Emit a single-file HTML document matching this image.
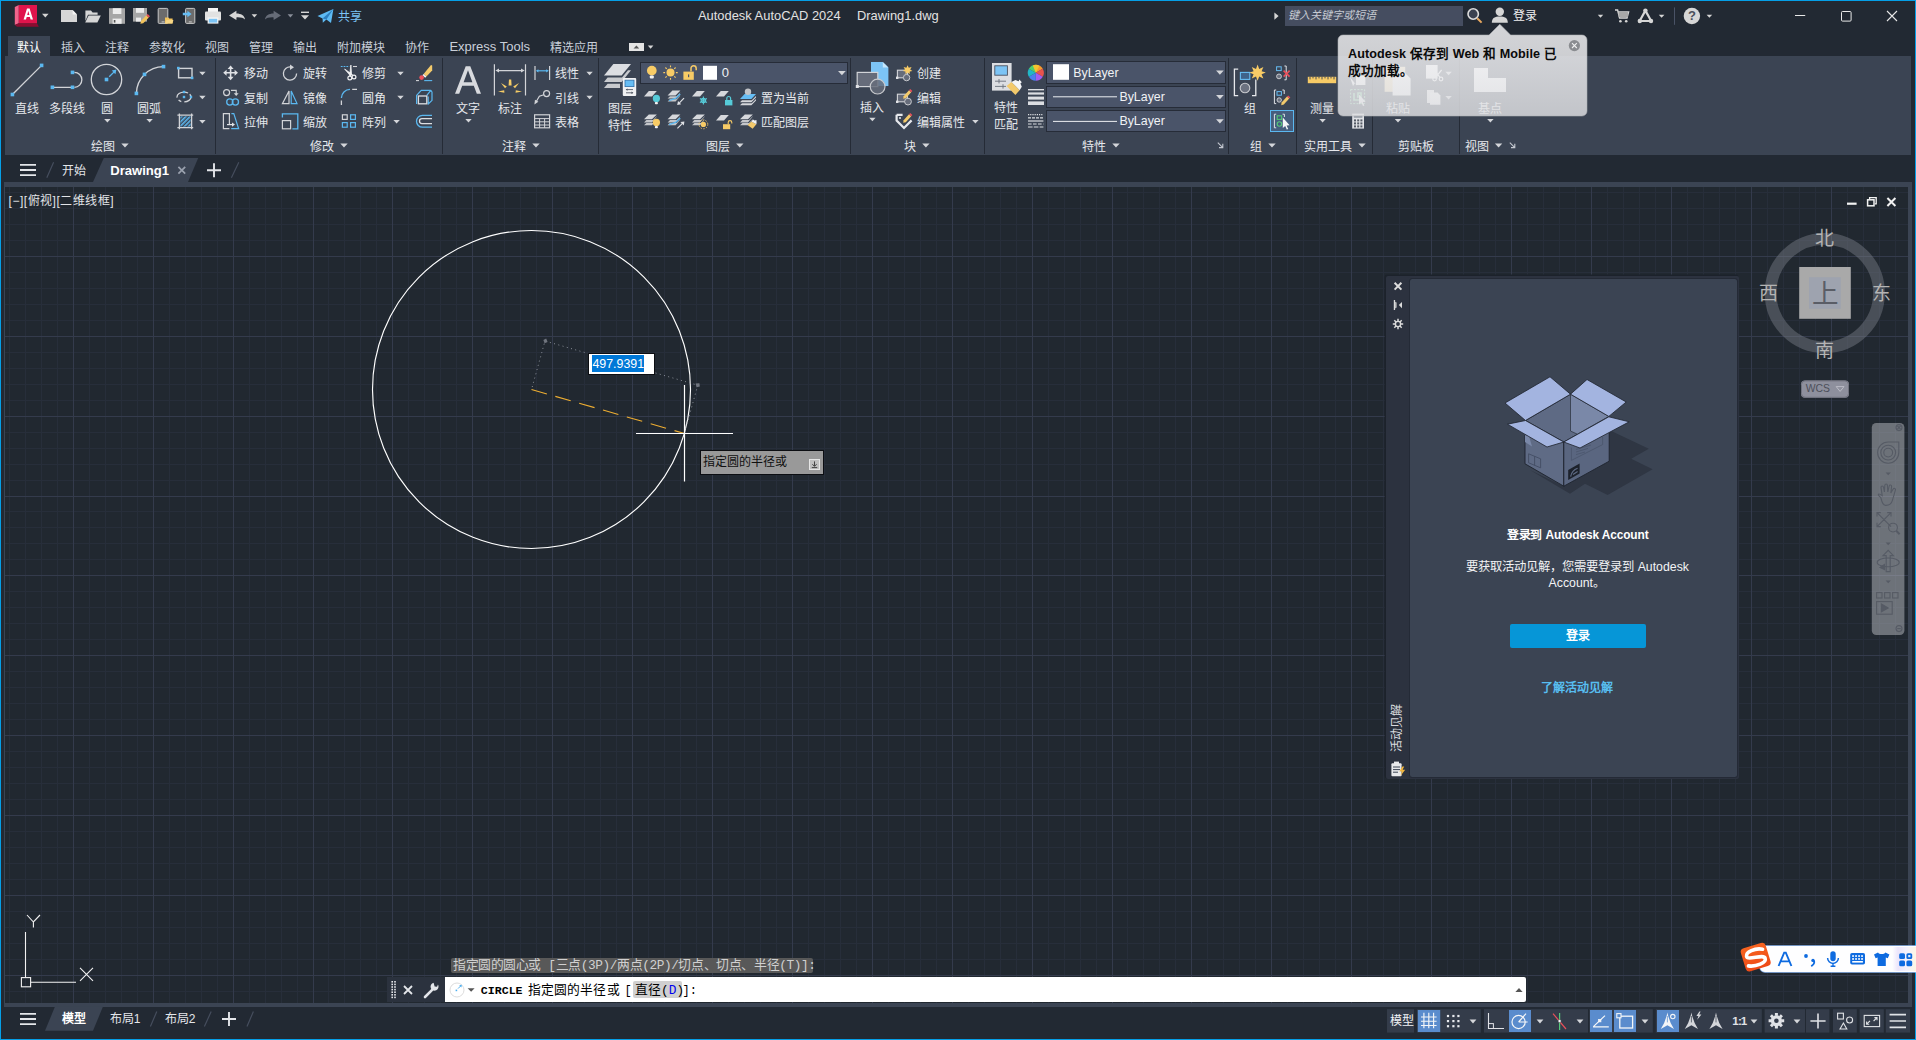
<!DOCTYPE html>
<html lang="zh-CN">
<head>
<meta charset="utf-8">
<title>Autodesk AutoCAD 2024 - Drawing1.dwg</title>
<style>
*{box-sizing:border-box;margin:0;padding:0}
html,body{width:1916px;height:1040px;overflow:hidden;background:#222933}
body{font-family:"Liberation Sans",sans-serif;font-size:12px;color:#e4e6ea;position:relative}
#win{position:absolute;left:0;top:0;width:1916px;height:1040px;background:#222933;overflow:hidden}
.a{position:absolute}
.c{position:absolute;transform:translate(-50%,-50%);white-space:nowrap;line-height:14px}
.l{position:absolute;transform:translate(0,-50%);white-space:nowrap;line-height:14px}
svg{position:absolute;left:0;top:0;overflow:visible}
.tab{position:absolute;top:40.8px;height:14px;line-height:14px;font-size:12px;color:#c9cfd9;white-space:nowrap}
.rb{color:#e6e8ec;font-size:12px;margin-top:1.4px}
.sep{position:absolute;top:58px;width:1px;height:96px;background:#252b36}
.dd{position:absolute;background:#4a5469;border:1px solid #262c38}
</style>
</head>
<body>
<div id="win">

<!-- ===== window borders ===== -->
<div class="a" style="left:0;top:0;width:1916px;height:1px;background:#059fe8"></div>
<div class="a" style="left:0;top:0;width:1px;height:1040px;background:#059fe8"></div>
<div class="a" style="left:1915px;top:0;width:1px;height:1040px;background:#059fe8"></div>
<div class="a" style="left:0;top:1038.8px;width:1916px;height:1.2px;background:#059fe8"></div>

<!-- ===== ribbon panel background ===== -->
<div class="a" id="ribbonbg" style="left:5px;top:56px;width:1906px;height:99px;background:#3b4453"></div>
<!-- active ribbon tab -->
<div class="a" style="left:8px;top:36px;width:42px;height:20px;background:#3b4453"></div>

<!-- ===== drawing frame strips ===== -->
<div class="a" style="left:4px;top:182px;width:1908px;height:825px;background:#3b4453"></div>
<!-- drawing area -->
<div class="a" id="draw" style="left:5px;top:187px;width:1903px;height:816px;background-color:#212830"></div>
<svg id="grid" width="1916" height="1040" viewBox="0 0 1916 1040" fill="none" shape-rendering="crispEdges"><path d="M9.5 187V1003M25.5 187V1003M41.5 187V1003M57.5 187V1003M89.5 187V1003M105.5 187V1003M121.5 187V1003M137.5 187V1003M169.5 187V1003M185.5 187V1003M201.5 187V1003M217.5 187V1003M249.5 187V1003M265.5 187V1003M281.5 187V1003M297.5 187V1003M328.5 187V1003M344.5 187V1003M360.5 187V1003M376.5 187V1003M408.5 187V1003M424.5 187V1003M440.5 187V1003M456.5 187V1003M488.5 187V1003M504.5 187V1003M520.5 187V1003M536.5 187V1003M568.5 187V1003M584.5 187V1003M600.5 187V1003M616.5 187V1003M648.5 187V1003M664.5 187V1003M680.5 187V1003M696.5 187V1003M728.5 187V1003M744.5 187V1003M760.5 187V1003M776.5 187V1003M808.5 187V1003M824.5 187V1003M840.5 187V1003M856.5 187V1003M888.5 187V1003M904.5 187V1003M920.5 187V1003M936.5 187V1003M968.5 187V1003M984.5 187V1003M1000.5 187V1003M1016.5 187V1003M1048.5 187V1003M1064.5 187V1003M1080.5 187V1003M1096.5 187V1003M1127.5 187V1003M1143.5 187V1003M1159.5 187V1003M1175.5 187V1003M1207.5 187V1003M1223.5 187V1003M1239.5 187V1003M1255.5 187V1003M1287.5 187V1003M1303.5 187V1003M1319.5 187V1003M1335.5 187V1003M1367.5 187V1003M1383.5 187V1003M1399.5 187V1003M1415.5 187V1003M1447.5 187V1003M1463.5 187V1003M1479.5 187V1003M1495.5 187V1003M1527.5 187V1003M1543.5 187V1003M1559.5 187V1003M1575.5 187V1003M1607.5 187V1003M1623.5 187V1003M1639.5 187V1003M1655.5 187V1003M1687.5 187V1003M1703.5 187V1003M1719.5 187V1003M1735.5 187V1003M1767.5 187V1003M1783.5 187V1003M1799.5 187V1003M1815.5 187V1003M1847.5 187V1003M1863.5 187V1003M1879.5 187V1003M1895.5 187V1003M5 192.5H1908M5 208.5H1908M5 224.5H1908M5 240.5H1908M5 272.5H1908M5 288.5H1908M5 304.5H1908M5 320.5H1908M5 352.5H1908M5 368.5H1908M5 384.5H1908M5 400.5H1908M5 432.5H1908M5 448.5H1908M5 464.5H1908M5 480.5H1908M5 511.5H1908M5 527.5H1908M5 543.5H1908M5 559.5H1908M5 591.5H1908M5 607.5H1908M5 623.5H1908M5 639.5H1908M5 671.5H1908M5 687.5H1908M5 703.5H1908M5 719.5H1908M5 751.5H1908M5 767.5H1908M5 783.5H1908M5 799.5H1908M5 831.5H1908M5 847.5H1908M5 863.5H1908M5 879.5H1908M5 911.5H1908M5 927.5H1908M5 943.5H1908M5 959.5H1908M5 991.5H1908" stroke="#272e3a" stroke-width="1"/><path d="M73.5 187V1003M153.5 187V1003M233.5 187V1003M313.5 187V1003M392.5 187V1003M472.5 187V1003M552.5 187V1003M632.5 187V1003M712.5 187V1003M792.5 187V1003M872.5 187V1003M952.5 187V1003M1032.5 187V1003M1112.5 187V1003M1191.5 187V1003M1271.5 187V1003M1351.5 187V1003M1431.5 187V1003M1511.5 187V1003M1591.5 187V1003M1671.5 187V1003M1751.5 187V1003M1831.5 187V1003M5 256.5H1908M5 336.5H1908M5 416.5H1908M5 496.5H1908M5 575.5H1908M5 655.5H1908M5 735.5H1908M5 815.5H1908M5 895.5H1908M5 975.5H1908" stroke="#343b4c" stroke-width="1"/></svg>

<!-- ===== TITLE BAR ===== -->
<svg id="tbsvg" width="1916" height="36" viewBox="0 0 1916 36">
  <!-- AutoCAD logo -->
  <polygon points="14.8,7 18.8,5 18.8,23.2 14.8,25" fill="#f0648c"/>
  <polygon points="14.8,25 18.8,23.2 37,23.2 38.8,26.7 17,26.7" fill="#8c0c30"/>
  <rect x="18.8" y="5" width="18.2" height="18.2" fill="#e0144c"/>
  <path d="M23.6 19.5 L27 8.5 L29.6 8.5 L33 19.5 L30.6 19.5 L29.9 17 L26.7 17 L26 19.5 Z M27.2 15 L29.4 15 L28.3 11 Z" fill="#fff"/>
  <polygon points="42,13.8 48.6,13.8 45.3,17.6" fill="#d4d4d4"/>
  <!-- new -->
  <polygon points="61,10 72.6,10 77,14.4 77,22 61,22" fill="#d6d6d6"/>
  <polygon points="72.6,10 77,14.4 72.6,14.4" fill="#f4f4f4"/>
  <!-- open -->
  <polygon points="85.4,10.6 91,10.6 92.6,12.4 97.6,12.4 97.6,14.8 88,14.8 85.4,21" fill="#d6d6d6"/>
  <polygon points="88.6,15.6 100.8,15.6 97.4,22.6 85.2,22.6" fill="#d6d6d6"/>
  <!-- save -->
  <rect x="109" y="8.2" width="16" height="15.6" fill="#a6a6a6"/>
  <rect x="112.8" y="8.2" width="8.6" height="5.8" fill="#ececec"/>
  <rect x="112.6" y="18.6" width="9" height="5.2" fill="#ececec"/>
  <rect x="113.8" y="20" width="1.6" height="2.6" fill="#555"/>
  <!-- save as -->
  <rect x="133" y="8" width="14" height="13.6" fill="#a6a6a6"/>
  <rect x="136" y="8" width="8" height="4.8" fill="#ececec"/>
  <rect x="136" y="17.6" width="5" height="4" fill="#ececec"/>
  <polygon points="141,21 146.4,15.2 148.8,17.4 143.2,23.2 140.4,23.8" fill="#f2c45c"/>
  <polygon points="146.4,15.2 147.6,14 150,16.2 148.8,17.4" fill="#e8505a"/>
  <!-- open from mobile -->
  <rect x="158.2" y="8.4" width="9.6" height="15" rx="1" fill="#6c6c6c" stroke="#c8c8c8" stroke-width="1"/>
  <rect x="161.6" y="21.4" width="3" height="1" fill="#c8c8c8"/>
  <polygon points="165,17.6 168.4,17.6 169.2,18.6 172.6,18.6 172.6,23.4 165,23.4" fill="#f2c45c"/>
  <polygon points="166.4,20 173.4,20 172.4,23.6 165,23.6" fill="#f7d685"/>
  <!-- save to mobile -->
  <rect x="185.6" y="8.4" width="9.2" height="15" rx="1" fill="#6c6c6c" stroke="#c8c8c8" stroke-width="1"/>
  <rect x="188.8" y="21.4" width="3" height="1" fill="#c8c8c8"/>
  <path d="M182.8 12.8 L187.4 12.8 L187.4 10.8 L191.6 14 L187.4 17.2 L187.4 15.2 L182.8 15.2 Z" fill="#66bdf4"/>
  <!-- print -->
  <rect x="208" y="8" width="10" height="4.4" fill="#f6f6f6"/>
  <rect x="205" y="11.6" width="16" height="9" rx="1" fill="#e2e2e2"/>
  <rect x="207.6" y="17.4" width="10.8" height="6.2" fill="#f6f6f6"/>
  <rect x="208.8" y="18.8" width="8.4" height="3.8" fill="#7cc4f5"/>
  <!-- undo -->
  <path d="M229 15.4 L236.4 10.8 L236.4 13.6 C241 13.6 244.6 15.6 245 19.6 C243.4 17.8 240.6 17.2 236.4 17.4 L236.4 20 Z" fill="#d6d6d6"/>
  <polygon points="251.6,14.2 257.2,14.2 254.4,17.4" fill="#d6d6d6"/>
  <!-- redo (dim) -->
  <path d="M281 15.4 L273.6 10.8 L273.6 13.6 C269 13.6 265.4 15.6 265 19.6 C266.6 17.8 269.4 17.2 273.6 17.4 L273.6 20 Z" fill="#666c78"/>
  <polygon points="287.6,14.2 293.2,14.2 290.4,17.4" fill="#8a8f9a"/>
  <!-- customize -->
  <rect x="301" y="11.6" width="8" height="1.4" fill="#d6d6d6"/>
  <polygon points="301,15.2 309,15.2 305,19.4" fill="#d6d6d6"/>
  <!-- share plane -->
  <polygon points="317.5,16 333.4,9 331,23 326.4,19.4 322.8,22.8 322.6,18.4" fill="#5ebaf3"/>
  <polygon points="322.6,18.4 333.4,9 326.4,19.4" fill="#2c7fc0"/>

  <!-- right side -->
  <polygon points="1274.4,12.4 1274.4,19.8 1278.6,16.1" fill="#d6d6d6"/>
  <rect x="1285" y="6" width="178" height="20" fill="#454d60"/>
  <circle cx="1473.2" cy="14" r="5.2" fill="#3a4150" stroke="#dcdcdc" stroke-width="1.6"/>
  <line x1="1477.2" y1="18.2" x2="1481.6" y2="22.6" stroke="#e8a860" stroke-width="2"/>
  <circle cx="1499.8" cy="11.8" r="4.2" fill="#d6d6d6"/>
  <path d="M1491.8 22.8 C1491.8 17.6 1495 16.4 1499.8 16.4 C1504.6 16.4 1507.8 17.6 1507.8 22.8 Z" fill="#d6d6d6"/>
  <polygon points="1597.8,14.8 1603.2,14.8 1600.5,17.8" fill="#d6d6d6"/>
  <!-- cart -->
  <path d="M1615 10 L1617.6 10 L1619.6 18 L1627 18 L1628.6 12 L1618.4 12" fill="none" stroke="#d6d6d6" stroke-width="1.4"/>
  <rect x="1618.6" y="12.2" width="9.4" height="5" fill="#a8a8a8"/>
  <circle cx="1620.4" cy="21.2" r="1.3" fill="#d6d6d6"/><circle cx="1626.2" cy="21.2" r="1.3" fill="#d6d6d6"/>
  <!-- autodesk A network -->
  <path d="M1645.4 10.6 L1639.6 21 L1651.2 21 Z" fill="none" stroke="#d6d6d6" stroke-width="2.2" stroke-linejoin="round"/>
  <circle cx="1645.4" cy="10.6" r="2.2" fill="#d6d6d6"/><circle cx="1639.8" cy="21" r="2.2" fill="#d6d6d6"/><circle cx="1651" cy="21" r="2.2" fill="#d6d6d6"/>
  <polygon points="1658.8,14.8 1664.4,14.8 1661.6,17.8" fill="#d6d6d6"/>
  <rect x="1674" y="7.4" width="1" height="17.4" fill="#4a5366"/>
  <circle cx="1691.9" cy="16" r="8.2" fill="#d6d6d6"/>
  <polygon points="1706.6,14.8 1712.2,14.8 1709.4,17.8" fill="#d6d6d6"/>
  <!-- window buttons -->
  <rect x="1795" y="15" width="10.2" height="1" fill="#e8e8e8"/>
  <rect x="1841.5" y="11.5" width="9.6" height="9.6" fill="none" stroke="#e8e8e8" stroke-width="1" rx="1"/>
  <path d="M1887 11 L1897 21 M1897 11 L1887 21" stroke="#e8e8e8" stroke-width="1.1"/>
</svg>
<div class="c" style="left:1691.9px;top:16.4px;font-size:13px;font-weight:bold;color:#4a4f5a">?</div>
<div class="l" style="left:337.6px;top:17.2px;color:#7cc4f5;font-size:12px">共享</div>
<div class="l" style="left:698px;top:15.6px;color:#e2e2e2;font-size:12.9px">Autodesk AutoCAD 2024</div>
<div class="l" style="left:857px;top:15.6px;color:#e2e2e2;font-size:12.9px">Drawing1.dwg</div>
<div class="l" style="left:1287.6px;top:15.4px;color:#c6cad2;font-size:11px;font-style:italic">键入关键字或短语</div>
<div class="l" style="left:1512.6px;top:16.4px;color:#f0f0f0;font-size:12px">登录</div>

<!-- ===== RIBBON TABS ===== -->
<div class="tab" style="left:16.8px;color:#fff">默认</div>
<div class="tab" style="left:60.8px">插入</div>
<div class="tab" style="left:104.8px">注释</div>
<div class="tab" style="left:149.4px">参数化</div>
<div class="tab" style="left:205px">视图</div>
<div class="tab" style="left:249.2px">管理</div>
<div class="tab" style="left:292.8px">输出</div>
<div class="tab" style="left:336.8px">附加模块</div>
<div class="tab" style="left:405.2px">协作</div>
<div class="tab" style="left:449.4px;font-size:13px;top:39.6px">Express Tools</div>
<div class="tab" style="left:549.8px">精选应用</div>
<div class="a" style="left:629px;top:43.4px;width:15px;height:7.6px;background:#e4e4e4"></div>
<svg width="1916" height="60" viewBox="0 0 1916 60"><polygon points="633.6,48.6 639.2,48.6 636.4,45.6" fill="#555"/><polygon points="647.8,45.6 653.4,45.6 650.6,48.8" fill="#d6d6d6"/></svg>

<!-- ===== RIBBON: separators ===== -->
<div class="sep" style="left:215px"></div>
<div class="sep" style="left:442px"></div>
<div class="sep" style="left:598px"></div>
<div class="sep" style="left:850px"></div>
<div class="sep" style="left:984px"></div>
<div class="sep" style="left:1228px"></div>
<div class="sep" style="left:1296px"></div>
<div class="sep" style="left:1372px"></div>
<div class="sep" style="left:1459px"></div>

<svg id="rbA" width="1916" height="160" viewBox="0 0 1916 160" fill="none">
 <defs>
  <polygon id="dn" points="-3.2,-1.6 3.2,-1.6 0,1.9" fill="#d4d6da"/>
  <pattern id="hat" width="3" height="3" patternUnits="userSpaceOnUse" patternTransform="rotate(-45)"><rect width="3" height="3" fill="#3b4453"/><rect width="3" height="1.6" fill="#5bb8f0"/></pattern>
 </defs>
 <!-- ===== DRAW ===== -->
 <line x1="12.4" y1="94.5" x2="41.6" y2="65.4" stroke="#d2d4d8" stroke-width="1.3"/>
 <rect x="10.6" y="92.7" width="3.6" height="3.6" fill="#5bb8f0"/><rect x="39.8" y="63.6" width="3.6" height="3.6" fill="#5bb8f0"/>
 <path d="M52.4 87.3 L72.5 87.3 M74.4 72.4 A7.45 7.45 0 0 1 74.4 87.3" stroke="#d2d4d8" stroke-width="1.3"/>
 <rect x="50.6" y="85.5" width="3.6" height="3.6" fill="#5bb8f0"/><rect x="70.7" y="85.5" width="3.6" height="3.6" fill="#5bb8f0"/><rect x="70.7" y="70.6" width="3.6" height="3.6" fill="#5bb8f0"/>
 <circle cx="106.5" cy="79.5" r="15.2" stroke="#d2d4d8" stroke-width="1.3"/>
 <rect x="104.7" y="77.7" width="3.6" height="3.6" fill="#5bb8f0"/>
 <path d="M109.2 76.8 L114.4 71.6" stroke="#5bb8f0" stroke-width="1.3"/><polygon points="116.4,69.6 115.4,74.2 111.8,70.6" fill="#5bb8f0"/>
 <path d="M136.4 93.4 A27.1 27.1 0 0 1 163.5 66.6" stroke="#d2d4d8" stroke-width="1.3"/>
 <rect x="134.6" y="91.6" width="3.6" height="3.6" fill="#5bb8f0"/><rect x="142.7" y="72.6" width="3.6" height="3.6" fill="#5bb8f0"/><rect x="161.7" y="64.8" width="3.6" height="3.6" fill="#5bb8f0"/>
 <rect x="178.6" y="68.4" width="13.4" height="9.4" stroke="#d2d4d8" stroke-width="1.4"/>
 <rect x="177" y="66.8" width="2.6" height="2.6" fill="#5bb8f0"/><rect x="190.8" y="76.6" width="2.6" height="2.6" fill="#5bb8f0"/>
 <use href="#dn" x="202.4" y="73.4"/><use href="#dn" x="202.4" y="97.4"/><use href="#dn" x="202.4" y="121.6"/>
 <ellipse cx="184" cy="97" rx="7" ry="4.9" stroke="#d2d4d8" stroke-width="1.3" stroke-dasharray="9 3 3 3 14 2"/>
 <rect x="182.8" y="95.8" width="2.4" height="2.4" fill="#5bb8f0"/><rect x="182.8" y="90.8" width="2.4" height="2.4" fill="#5bb8f0"/><rect x="189.8" y="95.8" width="2.4" height="2.4" fill="#5bb8f0"/>
 <rect x="180.4" y="116.4" width="10.2" height="10.2" fill="url(#hat)"/>
 <path d="M177.4 115.2 H193.2 M177.4 127.6 H193.2 M179.4 113.4 V129.2 M191.6 113.4 V129.2" stroke="#d2d4d8" stroke-width="1.3"/>
 <use href="#dn" x="107.4" y="120.6"/><use href="#dn" x="149.6" y="120.6"/>
 <use href="#dn" x="125" y="145.4" transform="translate(125 145.4) scale(1.15) translate(-125 -145.4)"/>

 <!-- ===== MODIFY ===== -->
 <!-- move -->
 <path d="M230.6 65.4 L233.6 69 H231.4 V72 H234.6 V69.8 L238 72.8 L234.6 75.8 V73.6 H231.4 V76.8 H233.6 L230.6 80.2 L227.6 76.8 H229.8 V73.6 H226.6 V75.8 L223.2 72.8 L226.6 69.8 V72 H229.8 V69 H227.6 Z" fill="#e0e2e6"/>
 <!-- copy -->
 <circle cx="226.6" cy="92.6" r="3" stroke="#d2d4d8" stroke-width="1.2"/>
 <path d="M231 90.4 H236.2 V94" stroke="#d2d4d8" stroke-width="1.2"/><polygon points="233.8,93.2 238.6,93.2 236.2,96" fill="#d2d4d8"/>
 <circle cx="229.8" cy="102" r="3.1" stroke="#5bb8f0" stroke-width="1.3"/><circle cx="235.4" cy="102" r="3.1" stroke="#5bb8f0" stroke-width="1.3"/>
 <!-- stretch -->
 <path d="M229.4 124 V113.6 H223.4 V128.6 H229.4" stroke="#d2d4d8" stroke-width="1.2"/>
 <path d="M231.4 113.6 H233.8 L238.6 128.6 H231.2" stroke="#5bb8f0" stroke-width="1.2"/>
 <path d="M227 124.6 H232.6" stroke="#e0e2e6" stroke-width="1.2"/><polygon points="232,122.4 235,124.6 232,126.8" fill="#e0e2e6"/>
 <!-- rotate -->
 <path d="M290.6 67 A6.6 6.6 0 1 0 296.6 73.6" stroke="#d2d4d8" stroke-width="1.3"/><polygon points="290,64.4 294,67.2 290,70" fill="#d2d4d8"/>
 <!-- mirror -->
 <path d="M289 91 V103.6 H282.4 Z" stroke="#d2d4d8" stroke-width="1.2"/><path d="M291.2 91 V103.6 H297 Z" stroke="#5bb8f0" stroke-width="1.2"/>
 <!-- scale -->
 <path d="M282.4 117.6 V113.8 H297.8 V128.8 H292.4" stroke="#5bb8f0" stroke-width="1.3"/><rect x="282.4" y="120.6" width="8.2" height="8.2" stroke="#d2d4d8" stroke-width="1.2"/>
 <!-- trim -->
 <path d="M340.8 66.5 H349.4" stroke="#5bb8f0" stroke-width="1.1" stroke-dasharray="1.8 1"/><path d="M353 66.5 H357" stroke="#d2d4d8" stroke-width="1.1"/>
 <path d="M350.9 65 L351.6 75 L349.6 75.4 Z M344.6 69 L351.6 74 L350.4 75.8 Z" fill="#f0f1f3" stroke="#f0f1f3" stroke-width="0.8" stroke-linejoin="round"/><circle cx="349.8" cy="78" r="1.9" stroke="#f0f1f3" stroke-width="1.2"/><circle cx="354" cy="77" r="1.9" stroke="#f0f1f3" stroke-width="1.2"/><path d="M350.6 75 L350.2 76.2 M351.6 74.6 L352.8 75.6" stroke="#f0f1f3" stroke-width="1.3"/>
 <!-- fillet -->
 <path d="M341.4 98 A8.6 8.6 0 0 1 350 89.4" stroke="#5bb8f0" stroke-width="1.3"/><path d="M341.4 100.4 V105 M352.2 89.4 H357" stroke="#d2d4d8" stroke-width="1.3"/>
 <!-- array -->
 <g stroke="#5bb8f0" stroke-width="1.2"><rect x="342.4" y="114.8" width="4.8" height="4.6" stroke="#d2d4d8"/><rect x="350.6" y="114.8" width="4.8" height="4.6"/><rect x="342.4" y="122.6" width="4.8" height="4.6"/><rect x="350.6" y="122.6" width="4.8" height="4.6"/></g>
 <use href="#dn" x="400.5" y="73.4"/><use href="#dn" x="400.5" y="97.4"/><use href="#dn" x="396.6" y="121.6"/>
 <!-- erase -->
 <polygon points="423.6,74 431,65 432.2,65.4 432.2,70.4 426.4,76.6" fill="#f3ca6c"/><polygon points="422.4,75.2 423.6,74 426.4,76.6 425.2,77.8" fill="#f4f5f7"/><circle cx="421.6" cy="77.6" r="2.3" fill="#f0505a"/>
 <path d="M424.2 80.6 H432.2" stroke="#5bb8f0" stroke-width="1.1"/><path d="M416 80.6 H419" stroke="#d2d4d8" stroke-width="1.1"/>
 <!-- explode -->
 <path d="M416.6 104 V95.4 L421.2 90.4 H430.8 L426.8 95.4 M430.8 90.4 L432 92 V100.4 L428.2 104 V96.6" stroke="#5bb8f0" stroke-width="1.2" stroke-linejoin="round"/>
 <rect x="418.4" y="96" width="8.4" height="7.8" stroke="#dcdee2" stroke-width="1.3"/>
 <!-- offset -->
 <path d="M432 115.4 H422.4 A5.9 5.9 0 0 0 422.4 127.2 H432" stroke="#5bb8f0" stroke-width="1.3"/><path d="M432 118.6 H422 A2.5 2.5 0 0 0 422 123.6 H432" stroke="#dcdee2" stroke-width="1.3"/>
 <use href="#dn" x="344" y="145.4" transform="translate(344 145.4) scale(1.15) translate(-344 -145.4)"/>

 <!-- ===== ANNOTATE ===== -->
 <path d="M455 93.8 L465.7 66.2 L470.3 66.2 L481 93.8 L476.8 93.8 L473.8 85.8 L462.2 85.8 L459.2 93.8 Z M463.6 82.2 L472.4 82.2 L468 70.2 Z" fill="#d8dade" fill-rule="evenodd"/>
 <use href="#dn" x="468.5" y="120.6"/>
 <path d="M494.4 64.2 V95.6 M525.5 64.2 V95.6 M497.6 70.6 H522.4" stroke="#d2d4d8" stroke-width="1.2"/>
 <polygon points="495.4,70.6 499,68.6 499,72.6" fill="#d2d4d8"/><polygon points="524.6,70.6 521,68.6 521,72.6" fill="#d2d4d8"/>
 <g fill="#f5cc66"><polygon points="498,91.4 504.2,90.2 504.4,92.8"/><polygon points="501,83 506.8,86.4 505,88.2"/><polygon points="509,79.4 511.2,79.4 511.6,85.6 508.6,85.6"/><polygon points="519,83 513.2,86.4 515,88.2"/><polygon points="522,91.4 515.8,90.2 515.6,92.8"/></g>
 <path d="M535 66 V80 M549.6 66 V80" stroke="#d2d4d8" stroke-width="1.2"/><path d="M537.4 70.8 H547.2" stroke="#5bb8f0" stroke-width="1.2"/><polygon points="535.8,70.8 538.4,69.2 538.4,72.4" fill="#5bb8f0"/><polygon points="548.8,70.8 546.2,69.2 546.2,72.4" fill="#5bb8f0"/>
 <use href="#dn" x="589.6" y="73.4"/><use href="#dn" x="589.6" y="97.4"/>
 <circle cx="546.6" cy="93.6" r="3" stroke="#d2d4d8" stroke-width="1.2"/><path d="M543.8 94.8 L539.4 96.2 L536 102" stroke="#d2d4d8" stroke-width="1.2"/><polygon points="534.4,104.4 535,99.8 538.4,101.8" fill="#d2d4d8"/>
 <rect x="534.6" y="114.8" width="15" height="13" stroke="#d2d4d8" stroke-width="1.2"/><path d="M534.6 118.6 H549.6 M534.6 121.8 H549.6 M534.6 125 H549.6 M539.6 118.6 V127.8 M544.6 118.6 V127.8" stroke="#d2d4d8" stroke-width="1"/>
 <use href="#dn" x="536" y="145.4" transform="translate(536 145.4) scale(1.15) translate(-536 -145.4)"/>
</svg>
<!-- labels: draw -->
<div class="c rb" style="left:27px;top:107.4px">直线</div>
<div class="c rb" style="left:67.2px;top:107.4px">多段线</div>
<div class="c rb" style="left:107px;top:107.4px">圆</div>
<div class="c rb" style="left:149.4px;top:107.4px">圆弧</div>
<div class="c rb" style="left:103px;top:145.4px">绘图</div>
<!-- labels: modify -->
<div class="l rb" style="left:243.8px;top:72.8px">移动</div>
<div class="l rb" style="left:243.8px;top:97.2px">复制</div>
<div class="l rb" style="left:243.8px;top:121.4px">拉伸</div>
<div class="l rb" style="left:303px;top:72.8px">旋转</div>
<div class="l rb" style="left:303px;top:97.2px">镜像</div>
<div class="l rb" style="left:303px;top:121.4px">缩放</div>
<div class="l rb" style="left:362px;top:72.8px">修剪</div>
<div class="l rb" style="left:362px;top:97.2px">圆角</div>
<div class="l rb" style="left:362px;top:121.4px">阵列</div>
<div class="c rb" style="left:322.2px;top:145.4px">修改</div>
<!-- labels: annotate -->
<div class="c rb" style="left:468px;top:107.4px">文字</div>
<div class="c rb" style="left:510px;top:107.4px">标注</div>
<div class="l rb" style="left:555px;top:72.8px">线性</div>
<div class="l rb" style="left:555px;top:97.2px">引线</div>
<div class="l rb" style="left:555px;top:121.4px">表格</div>
<div class="c rb" style="left:514px;top:145.4px">注释</div>

<!-- dropdown boxes -->
<div class="dd" style="left:640px;top:62px;width:208px;height:22px"></div>
<div class="dd" style="left:1046px;top:61px;width:180px;height:23px"></div>
<div class="dd" style="left:1046px;top:86px;width:180px;height:22px"></div>
<div class="dd" style="left:1046px;top:110px;width:180px;height:22px"></div>
<div class="a" style="left:1270px;top:110px;width:24px;height:22px;background:#455e7e;border:1px solid #5bb8f0"></div>
<svg id="rbB" width="1916" height="160" viewBox="0 0 1916 160" fill="none">
 <defs>
  <g id="sheet"><polygon points="-6.4,1.4 -1.6,-4 6.4,-4 1.6,1.4" fill="#d6d8dc"/></g>
  <g id="stack"><polygon points="-6.4,-1.2 -1.6,-6 6.4,-6 1.6,-1.2" fill="#d6d8dc"/><polygon points="-6.4,2 -4,-0.4 2.6,-0.4 6,-3.8 6.4,-3.8 1.6,2" fill="#c4c6ca"/><polygon points="-6.4,4.8 -4,2.6 2.6,2.6 6,-0.8 6.4,-0.8 1.6,4.8" fill="#c4c6ca"/></g>
  <g id="bulb"><circle cx="0" cy="-1" r="3.6"/><rect x="-1.5" y="2.6" width="3" height="2.2" rx="0.8" fill="#f2f2f2"/></g>
 </defs>
 <!-- ===== LAYERS ===== -->
 <polygon points="604,75.6 613.4,64 631,64 621.6,75.6" fill="#dcdee2"/>
 <polygon points="604,82 607.6,77.6 622,77.6 628,70.2 631,70.2 621.6,82" fill="#c8cace"/>
 <polygon points="604,88 607.6,83.8 620,83.8 620,88" fill="#c8cace"/>
 <rect x="622.8" y="78" width="13.4" height="18" rx="1" fill="#f0f1f3"/><rect x="625" y="80.2" width="9" height="6.4" fill="#66bdf4" stroke="#2d6fa8" stroke-width="0.8"/>
 <path d="M626 89.6 H633 M626 92.8 H633" stroke="#555b66" stroke-width="0.9"/><polygon points="625.6,89.6 627.6,88.4 627.6,90.8" fill="#555b66"/><polygon points="633.4,92.8 631.4,91.6 631.4,94" fill="#555b66"/>
 <!-- dropdown content -->
 <use href="#bulb" x="651.8" y="72" fill="#f7cb66" transform="translate(651.8 72) scale(1.35) translate(-651.8 -72)"/>
 <circle cx="670.5" cy="72.6" r="4" fill="#f7cb66"/><g stroke="#f7cb66" stroke-width="1.1"><path d="M670.5 65.4 V67.2 M670.5 78 V79.8 M663.3 72.6 H665.1 M675.9 72.6 H677.7 M665.4 67.5 L666.7 68.8 M674.3 76.4 L675.6 77.7 M665.4 77.7 L666.7 76.4 M674.3 68.8 L675.6 67.5"/></g>
 <rect x="683.4" y="71.6" width="10.4" height="8.2" fill="#f7cb66"/><path d="M691 71.6 V68.4 A2.6 2.6 0 0 1 696.2 68.4 V70.2" stroke="#f7cb66" stroke-width="1.5"/><rect x="688" y="74.4" width="1.2" height="2.8" fill="#4a5469"/>
 <rect x="703" y="65.8" width="14" height="14" fill="#fff"/>
 <use href="#dn" x="841.9" y="73" transform="translate(841.9 73) scale(1.2) translate(-841.9 -73)"/>
 <!-- row 2 -->
 <use href="#sheet" x="650.4" y="95"/><use href="#bulb" x="656.4" y="99.4" fill="#56cbd8"/>
 <use href="#stack" x="674" y="96.6"/><path d="M669 100.6 L676 98.2 L680.2 94 " stroke="#5bb8f0" stroke-width="1.4"/><path d="M684 98.2 L679.4 102.8" stroke="#e0e2e6" stroke-width="1.2"/><polygon points="677.2,105 678,101 681.2,104.2" fill="#e0e2e6"/>
 <use href="#sheet" x="698.4" y="95"/><g stroke="#56cbd8" stroke-width="1.1"><path d="M703.4 96.4 V104.4 M699.9 98.4 L706.9 102.4 M699.9 102.4 L706.9 98.4"/><circle cx="703.4" cy="100.4" r="2.2"/></g>
 <use href="#sheet" x="722.4" y="95"/><rect x="725" y="100" width="7.4" height="5.4" fill="#56cbd8"/><path d="M726.8 100 V98.4 A1.9 1.9 0 0 1 730.6 98.4 V100" stroke="#56cbd8" stroke-width="1.2"/>
 <polygon points="740,99 744.6,94 756,94 751.4,99" fill="#66bdf4"/><polygon points="740,102.2 742,100.2 751.8,100.2 756,96 756,97.4 751.4,102.2" fill="#d6d8dc"/><polygon points="740,105.2 742,103.2 751.8,103.2 756,99 756,100.4 751.4,105.2" fill="#d6d8dc"/><circle cx="748" cy="91.8" r="3.2" fill="#c2c4c8"/>
 <!-- row 3 -->
 <use href="#stack" x="650.4" y="120.4"/><use href="#bulb" x="656.4" y="123.4" fill="#f7cb66"/>
 <use href="#stack" x="674" y="120.4"/><path d="M669 124.6 L676 122.2 L680.2 118" stroke="#5bb8f0" stroke-width="1.4"/><path d="M677.4 128.4 L682.4 123.4" stroke="#e0e2e6" stroke-width="1.2"/><polygon points="684.4,121.4 683.8,125.4 680.4,122" fill="#e0e2e6"/>
 <use href="#stack" x="698.4" y="120.4"/><circle cx="703.4" cy="124.4" r="2.6" fill="#f7cb66"/><circle cx="703.4" cy="124.4" r="4.4" stroke="#f7cb66" stroke-width="1" stroke-dasharray="1.2 1.6"/>
 <use href="#sheet" x="722.4" y="119"/><rect x="723" y="124.2" width="7.2" height="5" fill="#f7cb66"/><path d="M728.2 124.2 V122.4 A1.8 1.8 0 0 1 731.8 122.4 V123.4" stroke="#f7cb66" stroke-width="1.1"/>
 <use href="#stack" x="746.4" y="120.4"/><polygon points="747.6,125 751.4,121.6 756.4,124.2 752.6,128.8" fill="#f3ca6c"/><polygon points="751.4,121.6 753,119.4 754.6,120.6 756.4,120 756.6,122.4 756.4,124.2" fill="#f0f1f3"/>
 <use href="#dn" x="739.8" y="145.4" transform="translate(739.8 145.4) scale(1.15) translate(-739.8 -145.4)"/>

 <!-- ===== BLOCK ===== -->
 <polygon points="871,62 882.8,62 888.4,67.6 888.4,86 871,86" fill="#7cc4f5"/><polygon points="882.8,62 888.4,67.6 882.8,67.6" fill="#c6e6fb"/>
 <rect x="857.2" y="72.4" width="20.6" height="14.2" fill="#666c7a" stroke="#d2d4d8" stroke-width="1.2"/><rect x="855.8" y="85" width="3" height="3" fill="#e0e2e6"/>
 <circle cx="877.6" cy="86.6" r="7.4" fill="#666c7a" fill-opacity="0.85" stroke="#c8cace" stroke-width="1.2"/>
 <use href="#dn" x="872.4" y="119.4"/>
 <!-- create -->
 <rect x="897.4" y="70.2" width="10" height="7.6" fill="#666c7a" stroke="#d2d4d8" stroke-width="1.1"/><rect x="896" y="76.6" width="2.4" height="2.4" fill="#e0e2e6"/><circle cx="906.6" cy="77.6" r="3.2" fill="#666c7a" stroke="#c8cace" stroke-width="1"/>
 <polygon points="907.6,65.2 908.8,67.8 911.6,67 910.2,69.4 912.4,71 909.8,71.6 909.6,74.2 907.6,72.4 905.6,74.2 905.4,71.6 902.8,71 905,69.4 903.6,67 906.4,67.8" fill="#f7cb66"/>
 <!-- edit -->
 <rect x="897.4" y="94.2" width="10" height="7.6" fill="#666c7a" stroke="#d2d4d8" stroke-width="1.1"/><rect x="896" y="100.6" width="2.4" height="2.4" fill="#e0e2e6"/><circle cx="908" cy="101.6" r="3.4" fill="#666c7a" stroke="#c8cace" stroke-width="1"/>
 <polygon points="903.6,96.2 909,90.2 911.2,92.2 905.8,98.2 903.2,98.8" fill="#f3ca6c"/><polygon points="909,90.2 910.2,89 912.4,91 911.2,92.2" fill="#e8505a"/>
 <!-- edit attributes -->
 <path d="M896.6 114.8 H902.6 M896.6 114.8 V120.6 L904 128 L911.6 120.4" stroke="#e6e8ec" stroke-width="2.2"/><circle cx="900" cy="118" r="1" fill="#e6e8ec"/>
 <polygon points="903.6,120.2 909,114.2 911.2,116.2 905.8,122.2 903.2,122.8" fill="#f3ca6c"/><polygon points="909,114.2 910.2,113 912.4,115 911.2,116.2" fill="#e8505a"/>
 <use href="#dn" x="975.4" y="121.6"/>
 <use href="#dn" x="925.9" y="145.4" transform="translate(925.9 145.4) scale(1.15) translate(-925.9 -145.4)"/>

 <!-- ===== PROPERTIES ===== -->
 <rect x="992" y="63" width="19.6" height="27.6" fill="#dcdee2"/><rect x="994.8" y="65.8" width="12.6" height="9.4" fill="#7cc4f5" stroke="#4a5060" stroke-width="0.9"/>
 <path d="M995 81.2 H1006 M995 86.4 H1006 M999 79 V83.4 M1003 84.2 V88.6" stroke="#6a707c" stroke-width="0.9"/>
 <polygon points="1006.6,86 1011.4,82 1019.6,90.2 1015.4,95 " fill="#f3ca6c"/><polygon points="1011.4,82 1015.4,80 1018.6,81.2 1019.4,79.6 1021.8,82.2 1020.4,83.4 1021.8,86.8 1019.6,90.2" fill="#f4f5f7"/>
 <g transform="translate(1035.8 72.8)"><path d="M0 0 L0 -8 A8 8 0 0 1 6.93 -4 Z" fill="#fa9a2e"/><path d="M0 0 L6.93 -4 A8 8 0 0 1 6.93 4 Z" fill="#e8534d"/><path d="M0 0 L6.93 4 A8 8 0 0 1 0 8 Z" fill="#a35cf0"/><path d="M0 0 L0 8 A8 8 0 0 1 -6.93 4 Z" fill="#4a7ff0"/><path d="M0 0 L-6.93 4 A8 8 0 0 1 -6.93 -4 Z" fill="#21b7c6"/><path d="M0 0 L-6.93 -4 A8 8 0 0 1 0 -8 Z" fill="#4fcf6c"/><path d="M0 0 L-3 -7.4 A8 8 0 0 1 3.6 -7.1 Z" fill="#f6c32f"/></g>
 <rect x="1028" y="89" width="16" height="1.4" fill="#dcdee2"/><rect x="1028" y="92.4" width="16" height="2.2" fill="#dcdee2"/><rect x="1028" y="96.6" width="16" height="3" fill="#dcdee2"/><rect x="1028" y="101.4" width="16" height="3.6" fill="#dcdee2"/>
 <g stroke="#dcdee2" stroke-width="1.2"><path d="M1028 114.6 H1043.4" stroke-dasharray="1.2 1"/><path d="M1028 117.8 H1043.4" stroke-dasharray="3 1"/><path d="M1028 121 H1043.4"/><path d="M1028 124 H1043.4" stroke-dasharray="3.6 1.4"/><path d="M1028 127 H1043.4" stroke-dasharray="4.6 1.2"/></g>
 <rect x="1053" y="64.2" width="16" height="15.6" fill="#fff"/>
 <path d="M1053 96.8 H1117 M1053 121.4 H1117" stroke="#eceef2" stroke-width="1"/>
 <use href="#dn" x="1219.9" y="72.4" transform="translate(1219.9 72.4) scale(1.2) translate(-1219.9 -72.4)"/><use href="#dn" x="1219.9" y="97" transform="translate(1219.9 97) scale(1.2) translate(-1219.9 -97)"/><use href="#dn" x="1219.9" y="121.2" transform="translate(1219.9 121.2) scale(1.2) translate(-1219.9 -121.2)"/>
 <use href="#dn" x="1116" y="145.4" transform="translate(1116 145.4) scale(1.15) translate(-1116 -145.4)"/>
 <path d="M1217.8 142.6 L1222.6 147.4 M1219 147.6 H1222.8 V143.8" stroke="#c4c8d0" stroke-width="1.1"/>

 <!-- ===== GROUPS ===== -->
 <path d="M1238.2 69.2 H1234.4 V95.6 H1238.2 M1255.8 79.6 V95.6 H1252" stroke="#e6e8ec" stroke-width="1.3"/>
 <rect x="1240.4" y="72.4" width="9.4" height="7" fill="#3f638a" stroke="#66bdf4" stroke-width="1.1"/><circle cx="1245" cy="88" r="4.8" fill="#6c7280" stroke="#c8cace" stroke-width="1.1"/>
 <polygon points="1257.6,64.4 1259.2,69 1263.4,67 1261.6,71.2 1265.8,72.6 1261.6,74.2 1263.4,78.4 1259.2,76.6 1257.6,80.8 1256,76.6 1251.8,78.4 1253.6,74.2 1249.4,72.6 1253.6,71.2 1251.8,67 1256,69" fill="#f7cb66"/>
 <!-- ungroup -->
 <rect x="1276.6" y="66.8" width="4.6" height="3.8" stroke="#66bdf4" stroke-width="1"/><circle cx="1279" cy="76.4" r="2.4" fill="#6c7280" stroke="#c8cace" stroke-width="1"/><path d="M1284.4 66 H1286.2 V79.8 H1284.4" stroke="#e0e2e6" stroke-width="1"/>
 <path d="M1283.6 70.6 L1289.6 76.6 M1289.6 70.6 L1283.6 76.6" stroke="#e8505a" stroke-width="1.6"/>
 <!-- group edit -->
 <path d="M1276.2 90 H1274.4 V103.6 H1276.2 M1282.4 90 H1284.2 V94" stroke="#e0e2e6" stroke-width="1"/><rect x="1277" y="91.6" width="4.4" height="3.6" stroke="#66bdf4" stroke-width="1"/><circle cx="1279.2" cy="100" r="2.2" fill="#6c7280" stroke="#c8cace" stroke-width="1"/>
 <polygon points="1281.6,102.6 1287,96.6 1289.2,98.6 1283.8,104.6 1281.2,105.2" fill="#f3ca6c"/><polygon points="1287,96.6 1288.2,95.4 1290.4,97.4 1289.2,98.6" fill="#e8505a"/>
 <!-- group selection (active) -->
 <path d="M1276.2 114.2 H1274.4 V127.8 H1276.2 M1282.6 114.2 H1284.4 V117" stroke="#e0e2e6" stroke-width="1"/><rect x="1277.2" y="115.8" width="4.4" height="3.6" stroke="#54c878" stroke-width="1.1"/><circle cx="1279.4" cy="124" r="2.2" stroke="#54c878" stroke-width="1.1"/>
 <polygon points="1282.8,117.6 1282.8,128 1285.2,126 1286.8,129.6 1288.2,129 1286.6,125.4 1289.6,125.2" fill="#f4f5f7"/>
 <use href="#dn" x="1272" y="145.4" transform="translate(1272 145.4) scale(1.15) translate(-1272 -145.4)"/>

 <!-- ===== UTILITIES ===== -->
 <rect x="1307.8" y="76.8" width="28.4" height="6.4" fill="#f7cb66"/><path d="M1310 76.8 V79.4 M1313 76.8 V78.4 M1316 76.8 V79.4 M1319 76.8 V78.4 M1322 76.8 V79.4 M1325 76.8 V78.4 M1328 76.8 V79.4 M1331 76.8 V78.4 M1334 76.8 V79.4" stroke="#3b4453" stroke-width="0.9"/>
 <use href="#dn" x="1322.6" y="120.6"/>
 <rect x="1352.2" y="113.6" width="11.8" height="15" fill="#e0e2e6"/><rect x="1353.8" y="115.2" width="8.6" height="2.6" fill="#9aa0aa"/><g fill="#555b66"><rect x="1354" y="119.4" width="2" height="2"/><rect x="1357.2" y="119.4" width="2" height="2"/><rect x="1360.4" y="119.4" width="2" height="2"/><rect x="1354" y="122.4" width="2" height="2"/><rect x="1357.2" y="122.4" width="2" height="2"/><rect x="1360.4" y="122.4" width="2" height="2"/><rect x="1354" y="125.4" width="2" height="2"/><rect x="1357.2" y="125.4" width="2" height="2"/><rect x="1360.4" y="125.4" width="2" height="2"/></g>
 <!-- quick select / select all (under balloon) -->
 <polygon points="1350,77 1353,86 1355,83 1357,86" fill="#f4f5f7"/><rect x="1356" y="76" width="9.4" height="9" fill="#f4f5f7"/>
 <rect x="1350.6" y="89.6" width="14" height="14" stroke="#7fd6a0" stroke-width="1" stroke-dasharray="2 1.4"/><path d="M1354 93 V100 H1361 V93 H1358 V97 H1357" stroke="#7fd6a0" stroke-width="1.6"/><polygon points="1359,94.6 1359,104.6 1361.4,102.6 1363,106 1364.4,105.4 1362.8,102 1365.6,101.8" fill="#f4f5f7"/>
 <use href="#dn" x="1362" y="145.4" transform="translate(1362 145.4) scale(1.15) translate(-1362 -145.4)"/>

 <!-- ===== CLIPBOARD (under balloon) ===== -->
 <rect x="1384.6" y="66.8" width="20.6" height="25" fill="#f3dcae"/><rect x="1390" y="64.4" width="9.6" height="5" fill="#e8e9ec"/>
 <polygon points="1392.6,73 1405,73 1410.6,78.6 1410.6,95.6 1392.6,95.6" fill="#f7f8fa"/>
 <use href="#dn" x="1398" y="120.6"/>
 <rect x="1426" y="65" width="11.6" height="13.6" fill="#f4f5f7"/><circle cx="1434.6" cy="79" r="1.8" stroke="#f4f5f7" stroke-width="1.2"/><circle cx="1441" cy="79" r="1.8" stroke="#f4f5f7" stroke-width="1.2"/><path d="M1435.6 77.4 L1441.6 70 M1440 77.4 L1434 70" stroke="#f4f5f7" stroke-width="1.2"/>
 <polygon points="1427,90 1434,90 1434,103 1427,103" fill="#e8e9ec"/><polygon points="1430,92.6 1437.6,92.6 1440.4,95.4 1440.4,104.8 1430,104.8" fill="#f7f8fa"/>
 <use href="#dn" x="1448.6" y="73.4"/><use href="#dn" x="1448.6" y="97.6"/>

 <!-- ===== VIEW (under balloon) ===== -->
 <polygon points="1474,68 1488,68 1488,78 1506,78 1506,92 1474,92" fill="#f7f8fa"/>
 <use href="#dn" x="1490.4" y="120.6"/>
 <use href="#dn" x="1498.6" y="145.4" transform="translate(1498.6 145.4) scale(1.15) translate(-1498.6 -145.4)"/>
 <path d="M1509.8 142.6 L1514.6 147.4 M1511 147.6 H1514.8 V143.8" stroke="#c4c8d0" stroke-width="1.1"/>
</svg>
<!-- labels: layers -->
<div class="c rb" style="left:620px;top:107.6px">图层</div>
<div class="c rb" style="left:620px;top:124.2px">特性</div>
<div class="l" style="left:721.8px;top:72.8px;font-size:13px;color:#f0f2f5">0</div>
<div class="l rb" style="left:760.8px;top:97.2px">置为当前</div>
<div class="l rb" style="left:760.8px;top:121.4px">匹配图层</div>
<div class="c rb" style="left:718.2px;top:145.4px">图层</div>
<!-- labels: block -->
<div class="c rb" style="left:872px;top:107px">插入</div>
<div class="l rb" style="left:917.2px;top:72.8px">创建</div>
<div class="l rb" style="left:917.2px;top:97.2px">编辑</div>
<div class="l rb" style="left:917.2px;top:121.4px">编辑属性</div>
<div class="c rb" style="left:910px;top:145.4px">块</div>
<!-- labels: properties -->
<div class="c rb" style="left:1006px;top:106.8px">特性</div>
<div class="c rb" style="left:1006px;top:123.2px">匹配</div>
<div class="l" style="left:1073.2px;top:72.6px;font-size:12.4px;color:#f0f2f5">ByLayer</div>
<div class="l" style="left:1119.4px;top:97.2px;font-size:12.4px;color:#f0f2f5">ByLayer</div>
<div class="l" style="left:1119.4px;top:121.4px;font-size:12.4px;color:#f0f2f5">ByLayer</div>
<div class="c rb" style="left:1094px;top:145.4px">特性</div>
<!-- labels: groups / utilities / clipboard / view -->
<div class="c rb" style="left:1250px;top:107.8px">组</div>
<div class="c rb" style="left:1255.8px;top:145.4px">组</div>
<div class="c rb" style="left:1322px;top:107.2px">测量</div>
<div class="c rb" style="left:1328px;top:145.4px">实用工具</div>
<div class="c rb" style="left:1398px;top:107.2px;color:#f4f5f7">粘贴</div>
<div class="c rb" style="left:1416.2px;top:145.4px">剪贴板</div>
<div class="c rb" style="left:1490.2px;top:107.2px;color:#f4f5f7">基点</div>
<div class="c rb" style="left:1477px;top:145.4px">视图</div>


<!-- ===== FILE TABS ===== -->
<svg id="ftsvg" width="1916" height="190" viewBox="0 0 1916 190" fill="none">
 <polygon points="103.8,158 198.2,158 188,182 93,182" fill="#3b4453"/>
 <path d="M20 164.8 H36 M20 170 H36 M20 175.2 H36" stroke="#e4e6ea" stroke-width="1.8"/>
 <path d="M46.8 177.8 L53.6 162.2 M231.4 177.8 L238.8 162.2" stroke="#454d5d" stroke-width="1.2"/>
 <path d="M178.4 166.8 L185.2 173.6 M185.2 166.8 L178.4 173.6" stroke="#9aa1ae" stroke-width="1.7"/>
 <path d="M207 170.2 H221 M214 163.2 V177.2" stroke="#e4e6ea" stroke-width="1.9"/>
</svg>
<div class="l" style="left:62.2px;top:171px;font-size:12px;color:#e4e6ea">开始</div>
<div class="l" style="left:110.2px;top:171.2px;font-size:13.1px;font-weight:bold;color:#fff">Drawing1</div>

<!-- ===== DRAWING CONTENT ===== -->
<div class="l" style="left:8.6px;top:200.6px;font-size:12px;color:#e2e4e8;letter-spacing:0.5px">[−][俯视][二维线框]</div>
<svg id="dwsvg" width="1916" height="1040" viewBox="0 0 1916 1040" fill="none">
 <!-- viewport controls -->
 <rect x="1847" y="202.6" width="9.6" height="2.2" fill="#f2f2f2"/>
 <rect x="1867.6" y="199.8" width="6.4" height="6" stroke="#f2f2f2" stroke-width="1.5"/><path d="M1869.6 199 V197.6 H1876.2 V203.8 H1874.8" stroke="#f2f2f2" stroke-width="1.3"/>
 <path d="M1887.4 198 L1895.4 206 M1895.4 198 L1887.4 206" stroke="#f2f2f2" stroke-width="2"/>
 <!-- circle being drawn -->
 <circle cx="531.5" cy="389.5" r="159" stroke="#ffffff" stroke-width="1.15"/>
 <!-- dim helper lines -->
 <path d="M532.2 387 L545 341 L697.8 385.2 L685 431" stroke="#8a8f98" stroke-width="1" stroke-dasharray="1 3.4"/>
 <polygon points="543.4,340 546.2,338.6 547.6,342 544.6,343.2" fill="#70757e"/><polygon points="695.6,383.6 699.4,383.2 699.8,386.6 696.6,387.2" fill="#70757e"/>
 <!-- rubber band -->
 <path d="M531.5 389.5 L684.5 433.5" stroke="#eeae32" stroke-width="1.1" stroke-dasharray="16 8.8"/>
 <!-- crosshair -->
 <path d="M636 433.5 H733 M684.5 385 V481.6" stroke="#ffffff" stroke-width="1.2"/>
 <!-- UCS icon -->
 <path d="M25.5 932 V977.6 M31 982.2 H76" stroke="#f2f2f2" stroke-width="1.1"/><rect x="21.4" y="977.6" width="9.2" height="9.2" stroke="#f2f2f2" stroke-width="1.1"/>
 <path d="M27 915 L33.4 922 L40 915 M33.4 922 V927.6" stroke="#f2f2f2" stroke-width="1.1"/>
 <path d="M80 967.8 L93 980.8 M93 967.8 L80 980.8" stroke="#f2f2f2" stroke-width="1.1"/>
 <!-- compass -->
 <circle cx="1824.8" cy="293" r="54.2" stroke="#7d828c" stroke-opacity="0.44" stroke-width="11.8"/>
 <rect x="1799.2" y="267" width="51.6" height="51.8" fill="#a9a9a9"/><rect x="1809" y="277.2" width="31.8" height="31.6" fill="#9ea3af"/>
 <!-- WCS -->
 <rect x="1801" y="380.4" width="48" height="17.4" rx="4" fill="#8e909d"/><rect x="1801.5" y="380.9" width="47" height="16.4" rx="3.6" stroke="#70727e" stroke-width="1"/>
 <polygon points="1836.2,386.6 1844,386.6 1840.1,391.4" fill="#8e909d" stroke="#bfc1ca" stroke-width="0.9"/>
 <!-- nav bar -->
 <rect x="1871.8" y="423" width="32.6" height="212" rx="4.5" fill="#b9bcc2" fill-opacity="0.5"/>
 <g stroke="#565b65" stroke-width="1.1">
  <circle cx="1899" cy="427.6" r="3" /><path d="M1897.4 426 L1900.6 429.2 M1900.6 426 L1897.4 429.2"/>
  <path d="M1877.6 452.6 A10.6 10.6 0 0 1 1888.2 442 H1898.8 V452.6 A10.6 10.6 0 0 1 1877.6 452.6 Z"/><circle cx="1888.2" cy="452.6" r="7.4"/><circle cx="1888.2" cy="452.6" r="4.4"/>
  <path d="M1880.8 497.6 C1876.4 494 1878.4 493 1882.2 495.6 L1881 487.4 C1881 485.6 1883.2 485.6 1883.6 487.4 L1884.4 492 L1884.8 485.4 C1885 483.6 1887.4 483.6 1887.4 485.4 L1887.8 492 L1889.2 486 C1889.6 484.4 1891.8 484.8 1891.6 486.6 L1890.8 493 L1893.2 489 C1894 487.6 1896 488.4 1895.4 490.2 L1892.4 500.4 C1891.4 504 1889 505.6 1885.4 505.4 C1883.4 505.2 1882.4 504 1880.8 497.6 Z"/>
  <path d="M1877 512.6 L1891 526.6 M1891 512.6 L1877 526.6 M1877 516.4 V512.6 H1880.8 M1887.2 512.6 H1891 V516.4 M1877 522.8 V526.6 H1880.8"/><circle cx="1893" cy="527.6" r="4.4"/><path d="M1896.2 530.8 L1899.6 534.2" stroke-width="2"/>
  <path d="M1886.2 571.6 V555.6 H1883 L1888.2 550.4 L1893.4 555.6 H1890.2 V571.6 Z"/><ellipse cx="1888.2" cy="562.4" rx="11" ry="4.4"/><polygon points="1880,567.4 1884.4,564.4 1884.6,569.6" fill="#565b65"/>
  <rect x="1876.6" y="592.6" width="5.4" height="5.4"/><rect x="1884.6" y="592.6" width="5.4" height="5.4"/><rect x="1892.6" y="592.6" width="5.4" height="5.4"/><rect x="1876.6" y="601.6" width="15.6" height="12.6"/><polygon points="1881.4,604 1881.4,611.8 1888.2,607.9" fill="#565b65"/>
  <circle cx="1899" cy="628.6" r="3"/><path d="M1897.2 628.6 H1900.8"/>
 </g>
 <g fill="#565b65"><polygon points="1885.6,472.4 1890.8,472.4 1888.2,475.2"/><polygon points="1885.6,542.4 1890.8,542.4 1888.2,545.2"/><polygon points="1885.6,580.4 1890.8,580.4 1888.2,583.2"/></g>
</svg>
<!-- compass letters -->
<div class="c" style="left:1824.8px;top:238.6px;font-family:'Liberation Serif',serif;font-size:19px;line-height:20px;color:#b4b4b4">北</div>
<div class="c" style="left:1824.8px;top:350.6px;font-family:'Liberation Serif',serif;font-size:19px;line-height:20px;color:#b4b4b4">南</div>
<div class="c" style="left:1768.4px;top:293.6px;font-family:'Liberation Serif',serif;font-size:19px;line-height:20px;color:#b4b4b4">西</div>
<div class="c" style="left:1881.2px;top:293.6px;font-family:'Liberation Serif',serif;font-size:19px;line-height:20px;color:#b4b4b4">东</div>
<div class="c" style="left:1825px;top:294.2px;font-family:'Liberation Serif',serif;font-size:26.5px;line-height:28px;color:#5a5d66">上</div>
<div class="l" style="left:1805.8px;top:389.2px;font-size:10.4px;color:#4c4f5a">WCS</div>
<!-- dynamic input -->
<div class="a" style="left:588px;top:353px;width:67px;height:22px;background:#fff;border:1px solid #0c0e12"></div>
<div class="a" style="left:592px;top:355px;width:52px;height:17px;background:#0078d7"></div>
<div class="l" style="left:592.4px;top:363.6px;font-size:12.4px;color:#fff">497.9391</div>
<!-- tooltip -->
<div class="a" style="left:700px;top:450px;width:124px;height:25px;background:#999999;border:1px solid #0c0e12"></div>
<div class="l" style="left:703px;top:462.2px;font-size:12px;color:#101010">指定圆的半径或</div>
<div class="a" style="left:809px;top:459px;width:11px;height:11px;background:#c0c0c0;border:1px solid #e6e6e6"></div>
<svg width="1916" height="1040" viewBox="0 0 1916 1040" fill="none"><path d="M814.5 461.4 V466 M812.4 464.2 L814.5 466.4 L816.6 464.2 M811.8 467.6 H817.2" stroke="#444" stroke-width="1"/></svg>


<!-- ===== ACTIVITY INSIGHTS PALETTE ===== -->
<div class="a" style="left:1386px;top:276.4px;width:353px;height:502.6px;background:#2c323f;border-radius:2px;box-shadow:-1px -1px 0 0.4px #1c222b"></div>
<div class="a" style="left:1410px;top:279px;width:327px;height:498px;background:#3b4453;border-radius:2.5px;box-shadow:0 0 0 1px #242a36"></div>
<svg id="plsvg" width="1916" height="1040" viewBox="0 0 1916 1040" fill="none">
 <path d="M1394.6 282.8 L1401.4 289.6 M1401.4 282.8 L1394.6 289.6" stroke="#dcdcdc" stroke-width="2"/>
 <rect x="1393.8" y="300" width="1.3" height="10" fill="#dcdcdc"/><polygon points="1395.1,301.8 1396.6,302.6 1396.6,307.6 1395.1,308.4" fill="#c8c8c8"/><polygon points="1398.8,305.1 1402,302 1402,308.2" fill="#dcdcdc"/>
 <g stroke="#dcdcdc" stroke-width="1.5"><path d="M1398 318.8 V329.2 M1392.8 324 H1403.2 M1394.3 320.3 L1401.7 327.7 M1401.7 320.3 L1394.3 327.7"/></g><circle cx="1398" cy="324" r="3.3" fill="#dcdcdc"/><circle cx="1398" cy="324" r="1.9" fill="#2c323f"/>
 <!-- empty box illustration -->
 <polygon points="1609.2,430 1648.8,448.8 1631.2,458.8 1652.6,469.2 1607.6,495 1585,483.8 1570,493.8 1530,470 1563.8,486.2 1609.2,461.2" fill="#2f3643"/>
 <polygon points="1525.5,420.5 1570.5,394.2 1608.8,416.4 1563.8,442" fill="#5e6a84" stroke="#1d222c" stroke-width="0.8"/>
 <polygon points="1570.5,394.2 1608.8,416.4 1577.4,434.2 1570.5,431" fill="#7a88a8" stroke="#1d222c" stroke-width="0.6"/>
 <polygon points="1525,435 1563.8,442 1563.8,486.2 1525,463.8" fill="#5f6b85" stroke="#1d222c" stroke-width="0.9"/>
 <polygon points="1563.8,442 1609.2,430 1609.2,461.2 1563.8,486.2" fill="#5a6680" stroke="#1d222c" stroke-width="0.9"/>
 <polygon points="1525,435 1529,436 1532,446.4 1525,442" fill="#7a88a8"/>
 <path d="M1571.4 447.6 V460.4 L1602.6 444.6 V437" stroke="#4a556c" stroke-width="0.8"/><path d="M1576 449.4 L1591 445 M1576 452 L1588 448.4 M1576 454.6 L1585 452" stroke="#4a556c" stroke-width="0.8"/>
 <path d="M1528.6 453.8 V462.8 L1540.6 467.8 V458.8 Z M1534.6 456.4 V465.2" stroke="#3f4960" stroke-width="0.8"/>
 <polygon points="1568.2,470 1579.6,463.6 1579.6,473.6 1568.2,480" fill="#1d222c"/><path d="M1570.6 476.6 C1571.6 471.6 1574.6 469.2 1577.6 468.2 M1573 474.6 L1577.6 471.4" stroke="#5f6b85" stroke-width="1.2"/>
 <polygon points="1505,403 1550,376.8 1570.5,394.2 1525.5,420.5" fill="#a3b4e0" stroke="#1d222c" stroke-width="0.8"/>
 <polygon points="1570.5,394.2 1587,379.5 1626.2,402 1608.8,416.4" fill="#a3b4e0" stroke="#1d222c" stroke-width="0.8"/>
 <polygon points="1507.5,424.2 1525.5,420.5 1563.8,442 1547,447" fill="#a3b4e0" stroke="#1d222c" stroke-width="0.8"/>
 <polygon points="1563.8,442 1608.8,416.8 1629.2,421.8 1580,448" fill="#a3b4e0" stroke="#1d222c" stroke-width="0.8"/>
 <!-- bottom icon -->
 <rect x="1391.4" y="763.2" width="10.2" height="13" rx="1" fill="#e8e9ec"/><rect x="1394" y="761.6" width="5" height="2.6" fill="#e8e9ec"/><path d="M1393 767 H1400 M1393 769.6 H1400 M1393 772.2 H1398" stroke="#3b4453" stroke-width="1"/><polygon points="1402.4,766.6 1399.4,771.4 1402,771.4 1400.4,776 1405.2,769.8 1402.6,769.8 1404.2,766.6" fill="#f2b63c"/>
</svg>
<div class="c" style="left:1577.6px;top:535px;font-size:11.9px;font-weight:bold;color:#fff;letter-spacing:-0.1px">登录到 Autodesk Account</div>
<div class="c" style="left:1577.6px;top:566.6px;font-size:12.3px;color:#f2f3f5">要获取活动见解，您需要登录到 Autodesk</div>
<div class="c" style="left:1576.8px;top:583px;font-size:12.3px;color:#f2f3f5">Account。</div>
<div class="a" style="left:1510px;top:624px;width:136px;height:24px;background:#0696d7;border-radius:2px"></div>
<div class="c" style="left:1578px;top:636.2px;font-size:12px;font-weight:bold;color:#fff">登录</div>
<div class="c" style="left:1577.4px;top:687.6px;font-size:12px;font-weight:bold;color:#57bdf0">了解活动见解</div>
<div class="a" style="left:1397.4px;top:727.6px;width:0;height:0"><div class="c" style="left:0;top:0;transform:translate(-50%,-50%) rotate(-90deg);font-size:12px;color:#d8dade">活动见解</div></div>

<!-- ===== COMMAND LINE ===== -->
<div class="a" style="left:451px;top:958px;width:362px;height:15px;background:#585858;border-radius:2px"></div>
<div class="l" style="left:453px;top:966.2px;font-family:'Liberation Mono',monospace;font-size:12.8px;color:#d0d0d0;letter-spacing:-0.42px">指定圆的圆心或 [三点(3P)/两点(2P)/切点、切点、半径(T)]:</div>
<div class="a" style="left:387px;top:977px;width:58px;height:25px;background:#2b323e"></div>
<div class="a" style="left:445px;top:977px;width:1081px;height:25px;background:#fff;border-radius:0 2px 2px 0"></div>
<div class="a" style="left:633px;top:981.4px;width:48.6px;height:16.4px;background:#d0d0d0;border-radius:2px"></div>
<svg id="cmsvg" width="1916" height="1040" viewBox="0 0 1916 1040" fill="none">
 <g fill="#e4e6ea"><rect x="391.4" y="981" width="1.6" height="1.6"/><rect x="394.2" y="981" width="1.6" height="1.6"/><rect x="391.4" y="983.6" width="1.6" height="1.6"/><rect x="394.2" y="983.6" width="1.6" height="1.6"/><rect x="391.4" y="986.2" width="1.6" height="1.6"/><rect x="394.2" y="986.2" width="1.6" height="1.6"/><rect x="391.4" y="988.8" width="1.6" height="1.6"/><rect x="394.2" y="988.8" width="1.6" height="1.6"/><rect x="391.4" y="991.4" width="1.6" height="1.6"/><rect x="394.2" y="991.4" width="1.6" height="1.6"/><rect x="391.4" y="994" width="1.6" height="1.6"/><rect x="394.2" y="994" width="1.6" height="1.6"/><rect x="391.4" y="996.6" width="1.6" height="1.6"/><rect x="394.2" y="996.6" width="1.6" height="1.6"/></g>
 <path d="M404 986 L412 994 M412 986 L404 994" stroke="#e4e6ea" stroke-width="1.8"/>
 <path d="M425 997 L433.4 988.6" stroke="#e4e6ea" stroke-width="2.6" stroke-linecap="round"/><path d="M437.6 984.2 A4 4 0 1 1 433 983 L434.6 986.6 L437 986.4 Z" fill="#e4e6ea" transform="rotate(8 435 987)"/>
 <circle cx="457" cy="990" r="7" stroke="#d8d8d8" stroke-width="0.9"/><rect x="455.6" y="989.6" width="1.6" height="1.6" fill="#4fb0f0"/><path d="M458 988.6 L460.6 986" stroke="#4fb0f0" stroke-width="1"/><polygon points="461.8,984.8 461.4,987.4 459.2,985.2" fill="#4fb0f0"/>
 <polygon points="467.6,988.2 474.6,988.2 471.1,991.8" fill="#555"/>
 <polygon points="1515.4,992 1522.6,992 1519,988" fill="#555"/>
</svg>
<div class="l" style="left:480.8px;top:991.4px;font-family:'Liberation Mono',monospace;font-size:11.6px;font-weight:bold;color:#000">CIRCLE</div>
<div class="l" style="left:528.4px;top:991.4px;font-family:'Liberation Mono',monospace;font-size:12.8px;color:#000;letter-spacing:0.02px">指定圆的半径或</div>
<div class="l" style="left:624.4px;top:991.2px;font-family:'Liberation Mono',monospace;font-size:12px;color:#000">[</div>
<div class="l" style="left:635px;top:990.8px;font-family:'Liberation Mono',monospace;font-size:12.8px;color:#000">直径(<span style="color:#0000ee">D</span>)</div>
<div class="l" style="left:682.6px;top:991.2px;font-family:'Liberation Mono',monospace;font-size:12px;color:#000">]:</div>

<!-- ===== STATUS BAR ===== -->
<svg id="stsvg" width="1916" height="1040" viewBox="0 0 1916 1040" fill="none">
 <polygon points="55,1006.6 103,1006.6 93,1030.8 45,1030.8" fill="#3b4453"/>
 <path d="M20 1013.8 H36 M20 1019 H36 M20 1024.2 H36" stroke="#e4e6ea" stroke-width="1.8"/>
 <path d="M150.4 1026.6 L156.8 1011.4 M204.4 1026.6 L211.2 1011.4 M247 1026.6 L253.4 1011.4" stroke="#454d5d" stroke-width="1.2"/>
 <path d="M222 1019 H236 M229 1012 V1026" stroke="#e4e6ea" stroke-width="1.9"/>
 <!-- button groups -->
 <g fill="#343c4a">
  <rect x="1387" y="1009.2" width="27" height="23.4"/><rect x="1417.2" y="1009.2" width="63.6" height="23.4"/><rect x="1484" y="1009.2" width="104" height="23.4"/><rect x="1589.4" y="1009.2" width="63.4" height="23.4"/>
  <rect x="1655.8" y="1009.2" width="106" height="23.4"/><rect x="1764.6" y="1009.2" width="40.4" height="23.4"/><rect x="1806" y="1009.2" width="23.4" height="23.4"/>
  <rect x="1833" y="1009.2" width="23.8" height="23.4"/><rect x="1859.6" y="1009.2" width="24.2" height="23.4"/><rect x="1885.8" y="1009.2" width="24.2" height="23.4"/>
 </g>
 <g fill="#5a8ccd"><rect x="1417.8" y="1010" width="22.4" height="22"/><rect x="1509" y="1010" width="22" height="22"/><rect x="1590" y="1010" width="22" height="22"/><rect x="1614" y="1010" width="22" height="22"/><rect x="1657" y="1010" width="22" height="22"/></g>
 <g stroke="#f4f6f8" stroke-width="1.2">
  <path d="M1421 1017 H1436.6 M1421 1021.2 H1436.6 M1421 1025.5 H1436.6 M1423.9 1012.8 V1028.2 M1428.8 1012.8 V1028.2 M1433.6 1012.8 V1028.2" stroke-width="1.15"/>
  <path d="M1488.5 1013 V1028.5 H1504" stroke="#e0e2e6" stroke-width="1.1"/><rect x="1488.5" y="1023.6" width="4.9" height="4.9" stroke="#e0e2e6" stroke-width="1"/>
  <circle cx="1518.6" cy="1022" r="6.6"/><path d="M1518.6 1022 H1527.6 M1518.6 1022 L1526 1013.6"/>
  <path d="M1593 1026.8 H1608.8 M1593.4 1026.6 L1605 1015.6" stroke-width="1.2"/><rect x="1598.4" y="1019.3" width="2.6" height="2.6" fill="#f4f6f8" stroke-width="0.6"/>
  <rect x="1619.8" y="1016.2" width="12.8" height="11.8" stroke-width="1.3"/><rect x="1616.8" y="1013.6" width="4.2" height="4.2" fill="#5a8ccd" stroke-width="1.1"/>
 </g>
 <g fill="#e8eaee"><rect x="1446.9" y="1014.9" width="2.2" height="2.2"/><rect x="1452.3" y="1014.9" width="2.2" height="2.2"/><rect x="1457.3" y="1014.9" width="2.2" height="2.2"/><rect x="1446.9" y="1020" width="2.2" height="2.2"/><rect x="1452.3" y="1020" width="2.2" height="2.2"/><rect x="1457.3" y="1020" width="2.2" height="2.2"/><rect x="1446.9" y="1025.1" width="2.2" height="2.2"/><rect x="1452.3" y="1025.1" width="2.2" height="2.2"/><rect x="1457.3" y="1025.1" width="2.2" height="2.2"/></g>
 <g fill="#d4d6da"><polygon points="1469.6,1019.6 1476.4,1019.6 1473,1023.4"/><polygon points="1536.6,1019.6 1543.4,1019.6 1540,1023.4"/><polygon points="1576.6,1019.6 1583.4,1019.6 1580,1023.4"/><polygon points="1641.6,1019.6 1648.4,1019.6 1645,1023.4"/><polygon points="1750.6,1019.6 1757.4,1019.6 1754,1023.4"/><polygon points="1793.6,1019.6 1800.4,1019.6 1797,1023.4"/></g>
 <path d="M1559.6 1013 V1030" stroke="#54c878" stroke-width="1.2"/><path d="M1553 1013.6 L1566 1029" stroke="#e8505a" stroke-width="1.2"/><circle cx="1559.6" cy="1021" r="1.6" fill="#f4f6f8" stroke="#343c4a" stroke-width="0.5"/>
 <!-- annotation scale icons -->
 <path d="M1667.4 1012.6 Q1665.7 1021.6 1660.8000000000002 1029 L1667.4 1025.2 L1674.0 1029 Q1669.1000000000001 1021.6 1667.4 1012.6 Z" fill="#f4f6f8"/><path d="M1667.4 1016 V1022.4" stroke="#5a8ccd" stroke-width="0.7"/><circle cx="1672.8" cy="1016.6" r="2.2" stroke="#f4f6f8" stroke-width="1.1"/>
 <path d="M1691.4 1012.6 Q1689.7 1021.6 1684.8000000000002 1029 L1691.4 1025.2 L1698.0 1029 Q1693.1000000000001 1021.6 1691.4 1012.6 Z" fill="#d4d6da"/><path d="M1691.4 1016 V1022.4" stroke="#343c4a" stroke-width="0.7"/><polygon points="1699.4,1011.4 1696.4,1016 1698.4,1016 1697.2,1019.8 1701.4,1014.6 1699.2,1014.6 1700.6,1011.4" fill="#d4d6da"/>
 <path d="M1716 1012.6 Q1714.3 1021.6 1709.4 1029 L1716 1025.2 L1722.6 1029 Q1717.7 1021.6 1716 1012.6 Z" fill="#d4d6da"/><path d="M1716 1016 V1022.4" stroke="#343c4a" stroke-width="0.7"/>
 <!-- gear -->
 <g transform="translate(1776.4 1020.8)"><circle r="5.6" fill="#e0e2e6"/><g stroke="#e0e2e6" stroke-width="3"><path d="M0 -7.8 V-5 M0 7.8 V5 M-7.8 0 H-5 M7.8 0 H5 M-5.5 -5.5 L-3.6 -3.6 M5.5 5.5 L3.6 3.6 M-5.5 5.5 L-3.6 3.6 M5.5 -5.5 L3.6 -3.6"/></g><circle r="2.3" fill="#343c4a"/></g>
 <path d="M1810.4 1021 H1825.6 M1818 1013.4 V1028.6" stroke="#e0e2e6" stroke-width="1.6"/>
 <rect x="1837.6" y="1013.2" width="5.8" height="5.8" stroke="#e0e2e6" stroke-width="1.1"/><circle cx="1849.6" cy="1020" r="3" stroke="#e0e2e6" stroke-width="1.1"/><polygon points="1843.4,1023 1846.8,1029 1840,1029" stroke="#e0e2e6" stroke-width="1.1"/>
 <rect x="1864.2" y="1015.4" width="15.4" height="11.2" stroke="#e0e2e6" stroke-width="1.1"/><path d="M1866.6 1024.2 L1870 1020.8 M1866.6 1021.6 V1024.2 H1869.2 M1873.6 1021 L1877 1017.6 M1874.4 1017.6 H1877 V1020.2" stroke="#e0e2e6" stroke-width="1.1"/>
 <path d="M1889.6 1014.6 H1906 M1889.6 1021 H1906 M1889.6 1027.4 H1906" stroke="#e0e2e6" stroke-width="1.7"/>
</svg>
<div class="c" style="left:74.2px;top:1019.4px;font-size:12px;font-weight:bold;color:#fff">模型</div>
<div class="l" style="left:109.8px;top:1019.4px;font-size:12px;color:#e4e6ea">布局1</div>
<div class="l" style="left:164.8px;top:1019.4px;font-size:12px;color:#e4e6ea">布局2</div>
<div class="c" style="left:1401.6px;top:1021px;font-size:12px;color:#f0f2f5">模型</div>
<div class="c" style="left:1739.4px;top:1021.2px;font-size:11.6px;font-weight:bold;color:#e0e2e6;letter-spacing:-0.9px">1:1</div>

<!-- ===== SOGOU IME BAR ===== -->
<div class="a" style="left:1760px;top:946px;width:160px;height:26px;background:#fefeff;border-radius:5px 0 0 5px;box-shadow:0 0 0 0.8px #8fb8f2"></div>
<div class="a" style="left:1892px;top:946.6px;width:24px;height:24.8px;background:linear-gradient(to right,#ffffff 0%,#ece6fb 25%,#f4f1fd 60%,#fdf6e4 100%)"></div>
<svg id="imesvg" width="1916" height="1040" viewBox="0 0 1916 1040" fill="none">
 <defs><linearGradient id="sg" x1="0" y1="0" x2="0" y2="1"><stop offset="0" stop-color="#f7631f"/><stop offset="1" stop-color="#ee4a17"/></linearGradient></defs>
 <g transform="rotate(-17 1755.7 957.1)">
  <rect x="1742.7" y="945.1" width="26" height="24" rx="4" fill="url(#sg)"/>
  <path d="M1764.6 951.6 C1757.6 948 1747.8 949.2 1747.2 953.6 C1746.6 958.6 1764.2 956 1764.4 961 C1764.6 965.6 1753.2 966.6 1746.2 963.4" stroke="#fff" stroke-width="3.6" stroke-linecap="round"/>
 </g>
 <path d="M1778.6 966 L1784.2 952.6 H1785.8 L1791.4 966 M1780.6 961.4 H1789.4" stroke="#0e6be0" stroke-width="1.9"/>
 <circle cx="1806" cy="956" r="1.9" fill="#0e6be0"/><path d="M1813.4 960.6 C1814.8 961.6 1814.6 964 1811.8 965.8" stroke="#0e6be0" stroke-width="1.9" stroke-linecap="round"/><circle cx="1813" cy="960.4" r="1.7" fill="#0e6be0"/>
 <rect x="1830.3" y="951.2" width="5.4" height="10" rx="2.7" fill="#0e6be0"/><path d="M1827.6 958 A5.4 5.4 0 0 0 1838.4 958 M1833 963.4 V965.6 M1830.6 966.2 H1835.4" stroke="#0e6be0" stroke-width="1.5"/>
 <rect x="1850.2" y="953" width="14.8" height="11.6" rx="1.8" fill="#0e6be0"/><g fill="#fff"><rect x="1852.2" y="955.2" width="1.7" height="1.7"/><rect x="1855.2" y="955.2" width="1.7" height="1.7"/><rect x="1858.2" y="955.2" width="1.7" height="1.7"/><rect x="1861.2" y="955.2" width="1.7" height="1.7"/><rect x="1852.2" y="958.1" width="1.7" height="1.7"/><rect x="1855.2" y="958.1" width="1.7" height="1.7"/><rect x="1858.2" y="958.1" width="1.7" height="1.7"/><rect x="1861.2" y="958.1" width="1.7" height="1.7"/><rect x="1852.2" y="961" width="10.7" height="1.6"/></g>
 <path d="M1878 952.4 L1874 954.4 L1875.6 958.2 L1877.6 957.4 V966 H1885.8 V957.4 L1887.8 958.2 L1889.4 954.4 L1885.4 952.4 C1884.2 954.4 1879.2 954.4 1878 952.4 Z" fill="#0e6be0"/>
 <g fill="#0e6be0"><rect x="1899.2" y="953.2" width="5.8" height="5.8" rx="1.5"/><rect x="1906.4" y="953.2" width="5.8" height="5.8" rx="1.5"/><rect x="1899.2" y="960.4" width="5.8" height="5.8" rx="1.5"/><rect x="1906.4" y="960.4" width="5.8" height="5.8" rx="1.5"/></g>
 <rect x="1908.2" y="955" width="2.2" height="2.2" fill="#fff" fill-opacity="0.85"/>
</svg>

<!-- ===== BALLOON NOTIFICATION ===== -->
<svg id="blsvg" width="1916" height="130" viewBox="0 0 1916 130" fill="none">
 <defs><linearGradient id="blg" x1="0" y1="0" x2="0" y2="1"><stop offset="0" stop-color="#f6f6f8"/><stop offset="0.35" stop-color="#eeeef0"/><stop offset="1" stop-color="#dcdde0"/></linearGradient></defs>
 <path d="M1343 35 H1489 L1499.8 24.2 L1510.6 35 H1582 A5 5 0 0 1 1587 40 V111 A5 5 0 0 1 1582 116 H1343 A5 5 0 0 1 1338 111 V40 A5 5 0 0 1 1343 35 Z" fill="url(#blg)" fill-opacity="0.84" stroke="#aeb0b4" stroke-opacity="0.7" stroke-width="0.8"/>
 <circle cx="1574.4" cy="45.6" r="5.6" fill="#8a8c90"/><path d="M1572 43.2 L1576.8 48 M1576.8 43.2 L1572 48" stroke="#f0f0f0" stroke-width="1.1"/>
</svg>
<div class="l" style="left:1348px;top:53.6px;font-size:12.6px;font-weight:bold;color:#0a0a0a;letter-spacing:0.1px">Autodesk 保存到 Web 和 Mobile 已</div>
<div class="l" style="left:1348px;top:71.2px;font-size:12.6px;font-weight:bold;color:#0a0a0a">成功加载。</div>


</div>
</body>
</html>
